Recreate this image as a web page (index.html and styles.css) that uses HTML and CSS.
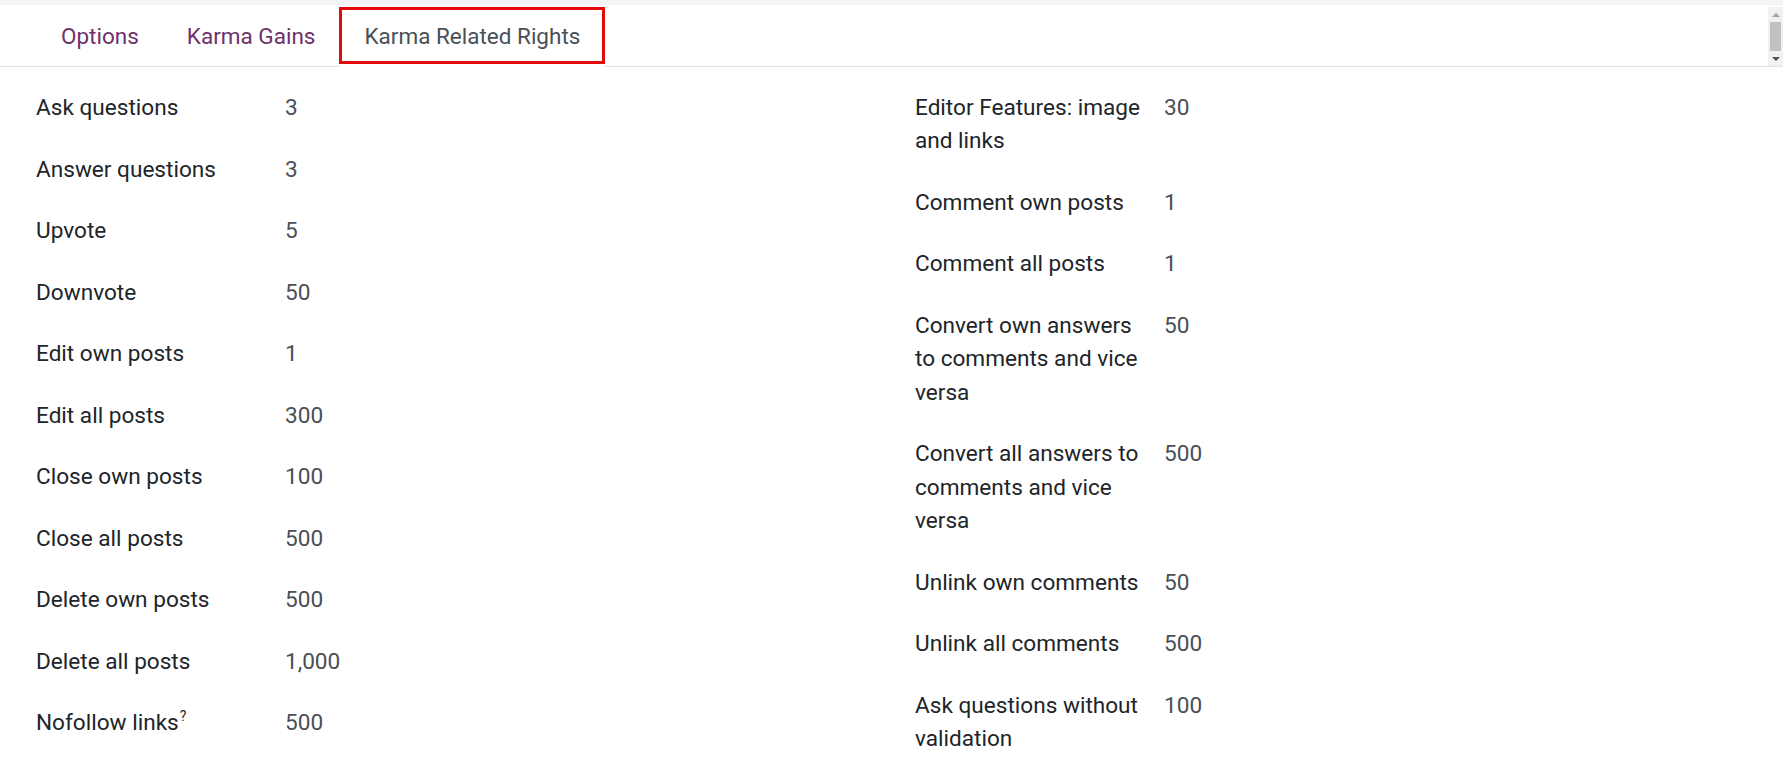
FILE: index.html
```html
<!DOCTYPE html>
<html lang="en">
<head>
<meta charset="utf-8">
<title>Karma Related Rights</title>
<link rel="stylesheet" href="styles.css">
</head>
<body>
<div class="topband"></div>
<header class="tabbar">
  <nav class="tabs">
    <a class="tab">Options</a>
    <a class="tab">Karma Gains</a>
    <a class="tab tab-active"><span class="tab-frame">Karma Related Rights</span></a>
  </nav>
  <div class="scrollbar">
    <span class="sb-up"></span>
    <span class="sb-thumb"></span>
    <span class="sb-down"></span>
  </div>
</header>
<main class="groups">
  <section class="group">
    <div class="row"><div class="label">Ask questions</div><div class="value">3</div></div>
    <div class="row"><div class="label">Answer questions</div><div class="value">3</div></div>
    <div class="row"><div class="label">Upvote</div><div class="value">5</div></div>
    <div class="row"><div class="label">Downvote</div><div class="value">50</div></div>
    <div class="row"><div class="label">Edit own posts</div><div class="value">1</div></div>
    <div class="row"><div class="label">Edit all posts</div><div class="value">300</div></div>
    <div class="row"><div class="label">Close own posts</div><div class="value">100</div></div>
    <div class="row"><div class="label">Close all posts</div><div class="value">500</div></div>
    <div class="row"><div class="label">Delete own posts</div><div class="value">500</div></div>
    <div class="row"><div class="label">Delete all posts</div><div class="value">1,000</div></div>
    <div class="row"><div class="label">Nofollow links<sup class="help">?</sup></div><div class="value">500</div></div>
  </section>
  <section class="group">
    <div class="row"><div class="label">Editor Features: image and links</div><div class="value">30</div></div>
    <div class="row"><div class="label">Comment own posts</div><div class="value">1</div></div>
    <div class="row"><div class="label">Comment all posts</div><div class="value">1</div></div>
    <div class="row"><div class="label">Convert own answers to comments and vice versa</div><div class="value">50</div></div>
    <div class="row"><div class="label">Convert all answers to comments and vice versa</div><div class="value">500</div></div>
    <div class="row"><div class="label">Unlink own comments</div><div class="value">50</div></div>
    <div class="row"><div class="label">Unlink all comments</div><div class="value">500</div></div>
    <div class="row"><div class="label">Ask questions without validation</div><div class="value">100</div></div>
  </section>
</main>
</body>
</html>
```
FILE: styles.css
```css
html, body {
  margin: 0;
  padding: 0;
  background: #ffffff;
}

body {
  font-family: Roboto, "Liberation Sans", Arial, sans-serif;
  color: #212529;
  overflow: hidden;
}

.topband {
  height: 5px;
  background: #f4f5f7;
}

.tabbar {
  display: flex;
  align-items: stretch;
  height: 61px;
  border-bottom: 1px solid #dee2e6;
  background: #ffffff;
}

.tabs {
  display: flex;
  align-items: stretch;
  padding-left: 37px;
}

.tab {
  display: flex;
  align-items: center;
  padding: 0 24px;
  font-size: 22.5px;
  color: #70306b;
  cursor: pointer;
  white-space: nowrap;
}

.tab-active {
  padding: 2px 0 3px;
  margin-bottom: -1px;
  background: #ffffff;
  color: #495057;
}

.tab-frame {
  display: flex;
  align-items: center;
  height: 100%;
  box-sizing: border-box;
  border: 3px solid #e20a0a;
  padding: 0 22px;
}

.scrollbar {
  margin-left: auto;
  margin-top: 2px;
  width: 15px;
  display: flex;
  flex-direction: column;
  align-items: center;
  background: #f1f1f1;
}

.sb-up,
.sb-down {
  display: block;
  width: 0;
  height: 0;
  border-left: 4px solid transparent;
  border-right: 4px solid transparent;
  margin: 6px 0 5px;
}

.sb-up {
  border-bottom: 4px solid #a3a3a3;
}

.sb-down {
  border-top: 4px solid #505050;
}

.sb-thumb {
  display: block;
  width: 11px;
  flex: 1;
  background: #c1c1c1;
}

.groups {
  display: grid;
  grid-template-columns: 1fr 1fr;
  column-gap: 47px;
  padding: 10px 36px 0;
}

.row {
  display: flex;
  align-items: flex-start;
  padding: 14.05px 0;
  font-size: 22.6px;
  line-height: 33.4px;
}

.label {
  width: 249px;
  flex: none;
  box-sizing: border-box;
  padding-right: 20px;
  color: #212529;
}

.value {
  color: #4a4f56;
}

.help {
  font-size: 14px;
  line-height: 0;
  vertical-align: 8.6px;
  margin-left: 1px;
  color: #212529;
}
```
